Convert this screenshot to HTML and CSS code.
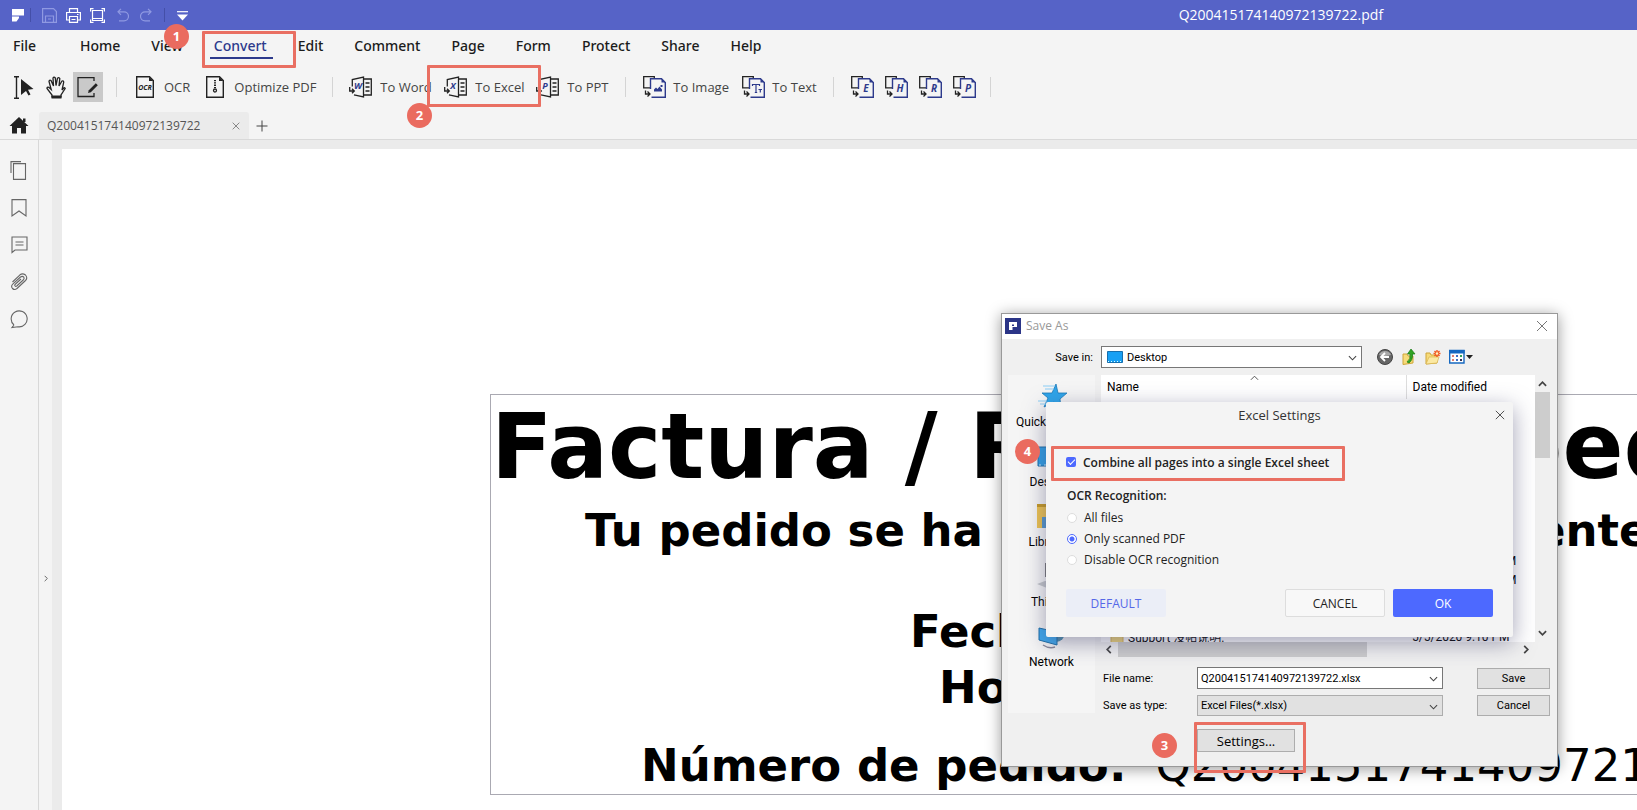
FILE: index.html
```html
<!DOCTYPE html>
<html lang="en">
<head>
<meta charset="utf-8">
<title>Q200415174140972139722.pdf</title>
<link rel="stylesheet" href="styles.css">
</head>
<body>
<svg class="defs" aria-hidden="true">
  <symbol id="office" viewBox="0 0 23 22">
    <path d="M3.300 10.500V3.500L14.500 1V21L5 18.800M14.500 3H22.300V19H14.500M16.500 7H20.500M16.500 11H20.500M16.500 15H20.500" fill="none" stroke="#222" stroke-width="1.300"/>
    <path d="M0.700 11V15H5M3 12.800L5.300 15L3 17.200" fill="none" stroke="#222" stroke-width="1.300"/>
  </symbol>
  <symbol id="export" viewBox="0 0 23 22">
    <path d="M7 11.800H.7V.7H11.300V2.500" fill="none" stroke="#222" stroke-width="1.300"/>
    <path d="M7.500 13V2.700H18.500L22.300 6.500V21.300H8.500" fill="none" stroke="#2d3a8c" stroke-width="1.400"/>
    <path d="M18.500 2.700V6.500H22.300Z" fill="#2d3a8c"/>
    <path d="M2.500 14.500V18H6.500M4.500 15.500L7 18L4.500 20.500" fill="none" stroke="#222" stroke-width="1.300"/>
  </symbol>
  <symbol id="chev" viewBox="0 0 10 6"><path d="M1 1L5 5L9 1" fill="none" stroke="currentColor" stroke-width="1.200"/></symbol>
  <symbol id="cross" viewBox="0 0 12 12"><path d="M1 1L11 11M11 1L1 11" fill="none" stroke="currentColor"/></symbol>
  <symbol id="folder" viewBox="0 0 14 14"><path d="M1 2H6L7 4H13V13H1Z" fill="#f3d878" stroke="#dcb64e"/></symbol>
</svg>

<header>
  <div class="titlebar">
    <div class="quick">
      <svg class="brand" width="12" height="13" viewBox="0 0 12 13"><path d="M0 0H12V6.500H0ZM0 7.500H7V9L4.500 12.500H0Z" fill="#fff"/></svg>
      <i class="bar"></i>
      <button class="dim save" aria-label="Save"><svg width="15" height="15" viewBox="0 0 15 15"><path d="M.6.600H11.500L14.400 3.500V14.400H.6ZM3.500 14V8H11.500V14M6 11H9"/></svg></button>
      <button aria-label="Print"><svg width="15" height="15" viewBox="0 0 15 15"><path d="M3.500 4V.6H11.500V4M3.500 12H.6V4.500H14.400V12H11.500M3.500 8.500H11.500V14.400H3.500ZM5.500 11.500H9.500M11 6.500H12.500"/></svg></button>
      <button aria-label="Fit"><svg width="15" height="15" viewBox="0 0 15 15"><path d="M.6 3.500V.6H3.500M11.500.6H14.400V3.500M14.400 11.500V14.400H11.500M3.500 14.400H.6V11.500M2.500 2.500H12.500V12.500H2.500ZM3 10.500H12" /></svg></button>
      <button class="dim undo" aria-label="Undo"><svg width="12" height="14" viewBox="0 0 12 14"><path d="M4 .8L1 3.800L4 6.800M1 3.800H7A4.500 4.500 0 0 1 7 12.800H2"/></svg></button>
      <button class="dim redo" aria-label="Redo"><svg width="12" height="14" viewBox="0 0 12 14"><path d="M8 .8L11 3.800L8 6.800M11 3.800H5A4.500 4.500 0 0 0 5 12.800H10"/></svg></button>
      <i class="bar"></i>
      <button class="more" aria-label="Customize"><svg width="11" height="10" viewBox="0 0 11 10"><path d="M0 .7H11"/><path d="M0 3.500H11L5.500 9.500Z" class="solid"/></svg></button>
    </div>
    <span class="doc-title">Q200415174140972139722.pdf</span>
  </div>

  <nav class="menu">
    <a href="#" class="file">File</a><a href="#">Home</a><a href="#">View</a><a href="#" class="active">Convert</a><a href="#">Edit</a><a href="#">Comment</a><a href="#">Page</a><a href="#">Form</a><a href="#">Protect</a><a href="#">Share</a><a href="#">Help</a>
  </nav>

  <div class="toolbar">
    <button aria-label="Select"><svg width="20" height="23" viewBox="0 0 20 23"><path d="M0 .7H5M0 22.300H5M2.500 .7V22.300" stroke="#222" fill="none" stroke-width="1.400"/><path d="M7 3L19.500 13L14 13.800L16.500 18.500L14.500 19.500L12 15L7 19Z" fill="#222"/></svg></button>
    <button class="hand" aria-label="Hand"><svg width="20" height="23" viewBox="0 0 20 23"><path d="M6 21.500V19L1 12.500Q.8 10.800 2.800 11.300L5.200 13.500L3 5.500Q3.300 3.600 5 4.500L7.500 10L7 2Q8 .2 9.300 2L10 9.500L11.500 2.200Q13 .8 13.800 2.500L13 10L16 5Q17.700 4.300 17.700 6.300L16 14Q18.500 10.500 19.200 12.500L15 19V21.500" fill="none" stroke="#222" stroke-width="1.300"/><path d="M5.500 19.500H15.500V22.500H5.500Z" fill="#222"/></svg></button>
    <button class="pressed" aria-label="Edit"><svg width="22" height="22" viewBox="0 0 22 22"><path d="M17 5V1.700H1V20.500H17V17" fill="none" stroke="#222" stroke-width="1.300"/><path d="M11 17L11.800 14.300L18.800 7.300L20.800 9.300L13.800 16.300Z" fill="#222"/></svg></button>
    <i class="sep s1"></i>
    <button><svg width="18" height="22" viewBox="0 0 18 22"><path d="M.7.7H13.500L17.300 4.500V21.300H.7Z" fill="none" stroke="#222" stroke-width="1.400"/><path d="M13 .7V5H17.300Z" fill="#222"/><text x="9" y="14" class="mini">OCR</text></svg>OCR</button>
    <button class="optimize"><svg width="18" height="22" viewBox="0 0 18 22"><path d="M.7.7H13.500L17.300 4.500V21.300H.7Z" fill="none" stroke="#222" stroke-width="1.400"/><path d="M13 .7V5H17.300Z" fill="#222"/><path d="M9 4V12" stroke="#222" stroke-width="2" stroke-dasharray="1.300 1"/><circle cx="9" cy="14.500" r="1.500" fill="none" stroke="#222" stroke-width="1.300"/></svg>Optimize PDF</button>
    <i class="sep s2"></i>
    <button class="word"><svg width="23" height="22"><use href="#office"/><text x="9" y="13" class="letter small">W</text></svg>To Word</button>
    <button class="excel"><svg width="23" height="22"><use href="#office"/><text x="9" y="13" class="letter small">X</text></svg>To Excel</button>
    <button class="ppt"><svg width="23" height="22"><use href="#office"/><text x="9" y="13" class="letter small">P</text></svg>To PPT</button>
    <i class="sep s3"></i>
    <button class="image"><svg width="23" height="22"><use href="#export"/><path d="M11 15.500V13.500L13 11.500L14.500 13L16.500 10.500L19 13.500V15.500ZM17.500 9H19.500V11H17.500Z" fill="#2d3a8c"/></svg>To Image</button>
    <button class="text"><svg width="23" height="22"><use href="#export"/><path d="M10.500 10V8.500H17.500V10M14 8.500V16.500M12.800 16.500H15.200M16.500 13.500H20M18.300 13.500V16.500" fill="none" stroke="#2d3a8c" stroke-width="1.200"/></svg>To Text</button>
    <i class="sep s4"></i>
    <div class="formats">
      <button aria-label="To EPUB"><svg width="23" height="22"><use href="#export"/><text x="15" y="16" class="letter">E</text></svg></button>
      <button aria-label="To HTML"><svg width="23" height="22"><use href="#export"/><text x="15" y="16" class="letter">H</text></svg></button>
      <button aria-label="To RTF"><svg width="23" height="22"><use href="#export"/><text x="15" y="16" class="letter">R</text></svg></button>
      <button aria-label="To PDF/A"><svg width="23" height="22"><use href="#export"/><text x="15" y="16" class="letter">P</text></svg></button>
    </div>
    <i class="sep s5"></i>
  </div>

  <div class="tabs">
    <button class="home" aria-label="Home"><svg width="20" height="17" viewBox="0 0 20 17"><path d="M10 0L19.500 9H17V16.500H12V11H8V16.500H3V9H.5L10 0ZM14 1.500H16.500V5H14Z" fill="#222"/></svg></button>
    <div class="tab"><span>Q200415174140972139722</span><button aria-label="Close tab"><svg width="8" height="8" viewBox="0 0 12 12"><use href="#cross"/></svg></button></div>
    <button class="plus" aria-label="New tab"><svg width="12" height="12" viewBox="0 0 12 12"><path d="M6 .5V11.500M.5 6H11.500" stroke="#444"/></svg></button>
  </div>
</header>

<main>
  <aside class="rail">
    <button aria-label="Pages"><svg width="18" height="20" viewBox="0 0 18 20"><path d="M3.500 2.600H15.500V18.400H3.500ZM1 12V.6H11"/></svg></button>
    <button aria-label="Bookmarks"><svg width="18" height="20" viewBox="0 0 18 20"><path d="M2 1.600H16V18L9 13L2 18Z"/></svg></button>
    <button aria-label="Comments"><svg width="18" height="20" viewBox="0 0 18 20"><path d="M2 2H17V15H5L2 17.500ZM5.500 7H13.500M5.500 10H13.500"/></svg></button>
    <button aria-label="Attachments"><svg width="18" height="20" viewBox="0 0 18 20"><path d="M2.500 10L10 2.800Q12.500.8 15.500 3Q18 6 15.500 8.500L7 16.500Q4.500 18.500 2.500 16.500Q.5 14 3 11.800L10.500 5Q12.500 3.600 13.800 5.200Q14.600 6.700 13.200 8L6.800 14Q5.500 14.800 4.900 13.800Q4.500 12.800 5.500 12L11 7"/></svg></button>
    <button aria-label="Search"><svg width="18" height="20" viewBox="0 0 18 20"><path d="M4 16A8 8 0 1 1 8 17.800L2 18.500L4 16"/></svg></button>
  </aside>
  <button class="collapse" aria-label="Expand panel"><svg width="4" height="7" viewBox="0 0 6 10"><path d="M1 1L5 5L1 9" fill="none" stroke="#555" stroke-width="1.300"/></svg></button>
  <div class="canvas">
    <article class="page">
      <section class="invoice">
        <h1>Factura / Recibo de pedido</h1>
        <p class="thanks">Tu pedido se ha procesado correctamente</p>
        <p class="date">Fecha:</p>
        <p class="hour">Hora:</p>
        <p class="order">Número de pedido:<span>&nbsp;&nbsp;Q200415174140972139722</span></p>
      </section>
    </article>
  </div>
</main>

<section class="saveas" aria-label="Save As">
  <div class="saveas-title">
    <svg width="16" height="16" viewBox="0 0 16 16"><path d="M0 0H16V16H0Z" fill="#2b3587"/><path d="M4 4H12V9H7.500V12H4Z" fill="#fff"/><path d="M7 6.500H9V8H7Z" fill="#2b3587"/></svg>
    <span>Save As</span>
    <button aria-label="Close"><svg width="12" height="12"><use href="#cross"/></svg></button>
  </div>
  <div class="lookin">
    <label for="savein">Save in:</label>
    <div class="combo">
      <svg class="ico" width="16" height="12" viewBox="0 0 16 12"><path d="M.5.500H15.500V11.500H.5Z" fill="#18a0f4" stroke="#176fae"/><path d="M1 10.500H15" stroke="#dff" stroke-dasharray="1 2"/></svg>
      <select id="savein"><option>Desktop</option></select>
      <svg class="arrow" width="9" height="6"><use href="#chev"/></svg>
    </div>
    <div class="tools">
      <button aria-label="Back"><svg width="16" height="16" viewBox="0 0 16 16"><circle cx="8" cy="8" r="7.500" fill="#666" stroke="#444"/><path d="M2 6A6.500 6.500 0 0 1 14 6Q8 8 2 6" fill="#aaa"/><path d="M8 4L4 8L8 12M4.500 8H12" stroke="#fff" stroke-width="1.800" fill="none"/></svg></button>
      <button aria-label="Up"><svg width="16" height="16" viewBox="0 0 16 16"><path d="M2 5H6L7 7H12V14L2 15.500Z" fill="#f6db7a" stroke="#cfa63a"/><path d="M6 13Q10 10 9 5H6.500L10 0L14 5H11.500Q12 11 8 14Z" fill="#31a424" stroke="#177a12" stroke-width=".7"/></svg></button>
      <button aria-label="New folder"><svg width="16" height="16" viewBox="0 0 16 16"><path d="M1 4H5L6 6H12V14L1 15Z" fill="#f6db7a" stroke="#cfa63a"/><path d="M1 15L4 8H14L12 14Z" fill="#fbe9a3" stroke="#d9b550" stroke-width=".7"/><path d="M12 1V8M8.500 4.500H15.500M9.500 2L14.500 7M14.500 2L9.500 7" stroke="#f2571c" stroke-width="1.400"/><circle cx="12" cy="4.500" r="1.300" fill="#fff3c0"/></svg></button>
      <button aria-label="View"><svg width="24" height="16" viewBox="0 0 24 16"><path d="M.7 1.500H15V14H.7Z" fill="#fff" stroke="#1668c0" stroke-width="1.400"/><path d="M0 1H15.700V4.500H0Z" fill="#1668c0"/><path d="M3 7H5M3 11H5" stroke="#e08070" stroke-width="2"/><path d="M7 7H9M7 11H9" stroke="#3f6fc4" stroke-width="2"/><path d="M11 7H13" stroke="#35a35a" stroke-width="2"/><path d="M11 11H13" stroke="#335" stroke-width="2"/><path d="M17 6H24L20.500 10Z" fill="#222"/></svg></button>
    </div>
  </div>
  <div class="saveas-body">
    <div class="places">
      <button><svg width="30" height="30" viewBox="0 0 30 30"><path d="M19 4L21 13L30 13L23 19L24 28L17 22L7 27L11 18L5 13L15 13Z" fill="#2fa5ea" stroke="#1a78b8" stroke-width=".8"/><path d="M6 6H18M8 9H17M1 21H10M3 24H9" stroke="#8acdf5"/></svg>Quick access</button>
      <button><svg width="30" height="30" viewBox="0 0 30 30"><path d="M1 7H29V26H1Z" fill="#2f9fe6" stroke="#1b6fa8"/><path d="M2 25H28" stroke="#cef" stroke-dasharray="2 3"/></svg>Desktop</button>
      <button><svg width="30" height="30" viewBox="0 0 30 30"><path d="M0 4H9L11 8H28V28H0Z" fill="#eec34f"/><path d="M0 4H9V7H0Z" fill="#c79a22"/><path d="M5 17H25V28H5Z" fill="#5497cc"/></svg>Libraries</button>
      <button><svg width="30" height="30" viewBox="0 0 30 30"><path d="M8 3H29V17H8Z" fill="#777"/><path d="M0 24L8 21H28V28H10Z" fill="#c4c7c9"/></svg>This PC</button>
      <button><svg width="30" height="30" viewBox="0 0 30 30"><circle cx="19" cy="13" r="9" fill="#4d8fae"/><path d="M2 8L20 12V25L2 20Z" fill="#3fa9ee" stroke="#1b6fa8"/><path d="M6 25Q12 29 18 27" fill="none" stroke="#889" stroke-width="1.500"/></svg>Network</button>
    </div>
    <div class="right">
      <div class="listing">
        <div class="files">
          <table>
            <thead><tr><th class="c-name">Name<svg class="sort" width="9" height="6" viewBox="0 0 10 6"><path d="M1 5L5 1L9 5" fill="none" stroke="#444"/></svg></th><th class="c-date">Date modified</th></tr></thead>
            <tbody>
              <tr><td><svg width="14" height="14"><use href="#folder"/></svg></td><td></td></tr>
              <tr class="gap"><td></td><td></td></tr>
              <tr><td></td><td>4/29/2020 9:25 PM</td></tr>
              <tr><td></td><td>4/27/2020 9:02 AM</td></tr>
              <tr><td></td><td></td></tr>
              <tr><td></td><td></td></tr>
              <tr><td><svg width="14" height="14"><use href="#folder"/></svg>Support 没帖说明.</td><td>5/5/2020 9:10 PM</td></tr>
            </tbody>
          </table>
        </div>
        <div class="vscroll">
          <svg width="9" height="6" viewBox="0 0 10 6"><path d="M1 5L5 1L9 5" fill="none" stroke="#444" stroke-width="1.900"/></svg>
          <i></i>
          <svg width="9" height="6" viewBox="0 0 10 6"><path d="M1 1L5 5L9 1" fill="none" stroke="#444" stroke-width="1.900"/></svg>
        </div>
      </div>
      <div class="hscroll">
        <svg width="6" height="9" viewBox="0 0 6 10"><path d="M5 1L1 5L5 9" fill="none" stroke="#444" stroke-width="1.900"/></svg>
        <i></i>
        <svg width="6" height="9" viewBox="0 0 6 10"><path d="M1 1L5 5L1 9" fill="none" stroke="#444" stroke-width="1.900"/></svg>
      </div>
      <div class="form">
        <label for="fname">File name:</label>
        <div class="combo"><input id="fname" type="text" value="Q200415174140972139722.xlsx"><svg class="arrow" width="9" height="6"><use href="#chev"/></svg></div>
        <button class="win">Save</button>
        <label for="ftype">Save as type:</label>
        <div class="combo grey"><select id="ftype"><option>Excel Files(*.xlsx)</option></select><svg class="arrow" width="9" height="6"><use href="#chev"/></svg></div>
        <button class="win">Cancel</button>
        <button class="win settings-btn">Settings...</button>
      </div>
    </div>
  </div>
</section>

<section class="settings" aria-label="Excel Settings">
  <div class="settings-title"><span>Excel Settings</span><button aria-label="Close"><svg width="10" height="10" viewBox="0 0 12 12"><use href="#cross"/></svg></button></div>
  <label class="combine"><input type="checkbox" checked>Combine all pages into a single Excel sheet</label>
  <fieldset>
    <legend>OCR Recognition:</legend>
    <label><input type="radio" name="ocr">All files</label>
    <label><input type="radio" name="ocr" checked>Only scanned PDF</label>
    <label><input type="radio" name="ocr">Disable OCR recognition</label>
  </fieldset>
  <div class="actions">
    <button class="default">DEFAULT</button>
    <button class="cancel">CANCEL</button>
    <button class="ok">OK</button>
  </div>
</section>

<div class="mark m1"></div><div class="mark m2"></div><div class="mark m3"></div><div class="mark m4"></div>
<div class="num n1">1</div><div class="num n2">2</div><div class="num n3">3</div><div class="num n4">4</div>
</body>
</html>
```
FILE: styles.css
```css
* { box-sizing: border-box; }
body { margin: 0; height: 100vh; display: flex; flex-direction: column; overflow: hidden; position: relative; background: #f4f4f4; color: #222; font-family: "Open Sans", "Noto Sans", "Noto Sans CJK SC", sans-serif; font-size: 13px; }
button { border: 0; padding: 0; background: none; font: inherit; color: inherit; display: flex; align-items: center; justify-content: center; }
svg { display: block; flex: none; }
.defs { position: absolute; width: 0; height: 0; }
p, h1 { margin: 0; }

.titlebar { height: 30px; background: #5663c7; color: #fff; display: grid; grid-template-columns: 72% 1fr; align-items: center; font-size: 14px; }
.doc-title { padding-bottom: 2px; }
.quick { display: flex; align-items: center; padding-left: 12px; }
.quick svg { fill: none; stroke: #fff; stroke-width: 1.2; }
.quick .brand, .quick .solid { stroke: none; }
.quick .solid { fill: #fff; }
.quick .dim svg { stroke: #8f99e2; }
.quick .bar { width: 1px; height: 14px; background: #444fa8; margin-left: 6px; }
.quick .save { margin-left: 11px; }
.quick button + button { margin-left: 9px; }
.quick .dim.undo { margin-left: 12px; }
.quick .dim.redo { margin-left: 11px; }
.quick .redo + .bar { margin-left: 12px; }
.quick .more { margin-left: 12px; padding-top: 2px; }

.menu { display: flex; gap: 31px; height: 34px; padding: 4px 13px 0; font-size: 14px; font-family: "Noto Sans", "Open Sans", sans-serif; font-weight: 500; line-height: 24px; }
.menu a { color: #1b1b1b; text-decoration: none; }
.menu .file { margin-right: 13px; }
.menu .active { color: #2d3a8c; height: 25px; margin: 0 -6px 0 -4px; padding: 0 6px 0 4px; border-bottom: 2px solid #2d3a8c; }

.toolbar { display: flex; align-items: center; height: 46px; padding-left: 14px; color: #444; }
.toolbar button { gap: 10px; justify-content: flex-start; white-space: nowrap; }
.toolbar .hand { margin-left: 12px; }
.toolbar .pressed { width: 30px; height: 30px; margin-left: 7px; background: #c9c9c9; justify-content: center; }
.sep { width: 1px; height: 20px; background: #d4d4d4; }
.s1 { margin: 0 19px 0 13px; }
.s2 { margin: 0 16px; }
.s3 { margin: 0 17px; }
.s4 { margin: 0 17px; }
.s5 { margin-left: 14px; }
.toolbar .optimize { margin-left: 16px; }
.toolbar .word, .toolbar .excel, .toolbar .ppt { gap: 8px; width: 95px; }
.toolbar .excel { width: 92px; }
.toolbar .ppt { width: 72px; }
.toolbar .image { gap: 7px; width: 99px; }
.toolbar .text { gap: 7px; width: 74px; }
.formats { display: flex; gap: 11px; }
.mini { font: italic 700 7px "Open Sans", sans-serif; text-anchor: middle; fill: #222; }
.letter { font: italic 700 10px "Open Sans", sans-serif; text-anchor: middle; fill: #2d3a8c; }
.letter.small { font-size: 9px; }

.tabs { display: flex; align-items: center; height: 30px; padding: 2px 0 0 9px; border-bottom: 1px solid #d9d9d9; }
.tab { display: flex; align-items: center; width: 210px; height: 27px; margin-left: 10px; padding-left: 8px; background: #ebebeb; border-radius: 3px 3px 0 0; color: #555; font-size: 12px; }
.tab button { margin-left: auto; margin-right: 9px; }
.plus { margin-left: 7px; }

main { flex: 1; min-height: 0; display: flex; }
.rail { width: 39px; border-right: 1px solid #d8d8d8; display: flex; flex-direction: column; align-items: center; gap: 17px; padding-top: 21px; }
.rail svg { fill: none; stroke: #666; stroke-width: 1.1; }
.rail button { height: 20px; }
.collapse { width: 13px; padding-top: 206px; }
.canvas { flex: 1; min-width: 0; background: #ebebeb; padding: 9px 0 0 10px; }
.page { height: 100%; background: #fff; overflow: hidden; padding: 245px 0 0 428px; }
.invoice { width: 1360px; border: 1px solid #aaa9b2; padding: 7px 0 0; color: #000; font: 700 45px/56px "DejaVu Sans", sans-serif; white-space: nowrap; }
.invoice h1 { font-size: 90px; line-height: 90px; margin-bottom: 11px; }
.thanks { padding-left: 94px; margin-bottom: 45px; }
.date { padding-left: 419px; }
.hour { padding-left: 448px; margin-bottom: 22px; }
.order { padding-left: 150px; }
.order span { font-weight: 400; }

.saveas { position: absolute; left: 1001px; top: 313px; width: 557px; height: 454px; border: 1px solid #999; background: #f0f0f0; box-shadow: 0 2px 14px rgba(0, 0, 0, .4); color: #000; font-family: Roboto, "Noto Sans CJK SC", sans-serif; font-size: 11px; }
.saveas-title { display: flex; align-items: center; gap: 5px; height: 25px; padding: 0 9px 2px 3px; background: #fff; color: #999; font-size: 12px; font-family: "Open Sans", sans-serif; }
.saveas-title button { margin-left: auto; color: #777; }
.lookin { display: flex; align-items: center; height: 36px; }
.lookin label { width: 91px; text-align: right; margin-right: 8px; }
.lookin .combo { width: 261px; }
.combo { position: relative; display: flex; align-items: center; height: 22px; border: 1px solid #777; background: #fff; }
.combo select, .combo input { flex: 1; min-width: 0; height: 100%; border: 0; padding: 0 0 0 3px; background: none; appearance: none; font: inherit; color: inherit; outline: 0; }
.combo .ico { margin: 0 1px 0 5px; }
.combo .arrow { position: absolute; right: 4px; top: 8px; color: #444; pointer-events: none; }
.combo.grey { height: 21px; background: #e1e1e1; border-color: #adadad; }
.tools { display: flex; gap: 8px; margin-left: 15px; }
.saveas-body { display: grid; grid-template-columns: 87px 1fr; column-gap: 6px; padding: 0 7px 0 6px; align-items: start; }
.places { height: 338px; padding-top: 1px; background: #f5f5f5; display: flex; flex-direction: column; font-size: 12px; }
.places button { flex-direction: column; justify-content: flex-end; height: 54px; margin-bottom: 6px; gap: 4px; line-height: 16px; }
.listing { display: grid; grid-template-columns: 1fr 15px; height: 267px; }
.files { background: #fff; overflow: hidden; font-size: 12px; }
.files table { border-collapse: collapse; width: 100%; table-layout: fixed; }
.files th { font-weight: 400; text-align: left; height: 24px; padding: 0 0 0 6px; position: relative; }
.c-name { width: 305px; border-right: 1px solid #ddd; }
.sort { position: absolute; left: 149px; top: 0; }
.files td { height: 19px; padding: 0 0 0 6px; white-space: nowrap; }
.files td:first-child { display: flex; align-items: center; gap: 4px; padding-left: 9px; }
.files .gap td { height: 133px; }
.vscroll { display: flex; flex-direction: column; align-items: center; padding: 6px 0; }
.vscroll i { width: 15px; height: 66px; margin: 5px 0 auto; background: #cdcdcd; }
.hscroll { display: flex; align-items: center; height: 15px; padding: 0 21px 0 5px; }
.hscroll i { width: 249px; height: 15px; margin: 0 auto 0 6px; background: #cdcdcd; }
.form { display: grid; grid-template-columns: 94px 246px 1fr 73px; row-gap: 6px; align-items: center; padding: 10px 0 0 2px; }
.form .win { grid-column: 4; }
.win { height: 21px; background: #e1e1e1; border: 1px solid #adadad; }
.form .settings-btn { grid-column: 2; width: 98px; height: 23px; margin-top: 7px; font: 13px "Open Sans", sans-serif; }

.settings { position: absolute; left: 1046px; top: 402px; width: 467px; height: 235px; padding: 0 20px; background: #f4f4f4; border-radius: 2px; box-shadow: 0 6px 22px rgba(70, 70, 110, .5); font-size: 12px; }
.settings-title { position: relative; height: 25px; display: flex; align-items: center; justify-content: center; font-size: 13px; color: #333; }
.settings-title button { position: absolute; right: -12px; top: 8px; }
.combine { display: flex; align-items: center; gap: 7px; height: 20px; margin-top: 25px; font-weight: 600; }
.settings input { appearance: none; margin: 0; width: 10px; height: 10px; }
.combine input { background: #4d69ff; border-radius: 2px; display: flex; align-items: center; justify-content: center; }
.combine input:checked::after { content: ""; width: 6px; height: 3px; border: solid #fff; border-width: 0 0 1px 1px; rotate: -45deg; margin-bottom: 2px; }
fieldset { border: 0; margin: 15px 0 0; padding: 0; min-width: 0; }
legend { padding: 0 0 0 1px; font-weight: 600; line-height: 18px; margin-bottom: 2px; }
fieldset label { display: flex; align-items: center; gap: 7px; height: 21px; padding-left: 1px; }
fieldset input { border: 1px solid #ddd; background: #fff; border-radius: 50%; }
fieldset input:checked { border-color: #4d69ff; background: radial-gradient(#4d69ff 2px, #fff 3px); }
.actions { display: flex; gap: 8px; margin-top: 19px; font-size: 12px; }
.actions button { width: 100px; height: 28px; border-radius: 2px; }
.actions .default { background: #ebeef7; color: #5668e8; margin-right: auto; }
.actions .cancel { border: 1px solid #ddd; background: #f8f8f8; }
.actions .ok { background: #4d69ff; color: #fff; }

.mark { position: absolute; border: 3px solid #e96f62; border-radius: 1px; }
.m1 { left: 202px; top: 31px; width: 94px; height: 37px; }
.m2 { left: 427px; top: 65px; width: 114px; height: 42px; }
.m3 { left: 1194px; top: 722px; width: 112px; height: 51px; }
.m4 { left: 1051px; top: 446px; width: 294px; height: 35px; }
.num { position: absolute; width: 25px; height: 25px; border-radius: 50%; background: #ea6b5f; color: #fff; font-weight: 700; font-size: 13px; line-height: 25px; text-align: center; }
.n1 { left: 164px; top: 24px; }
.n2 { left: 407px; top: 103px; }
.n3 { left: 1152px; top: 733px; }
.n4 { left: 1015px; top: 439px; }
```
